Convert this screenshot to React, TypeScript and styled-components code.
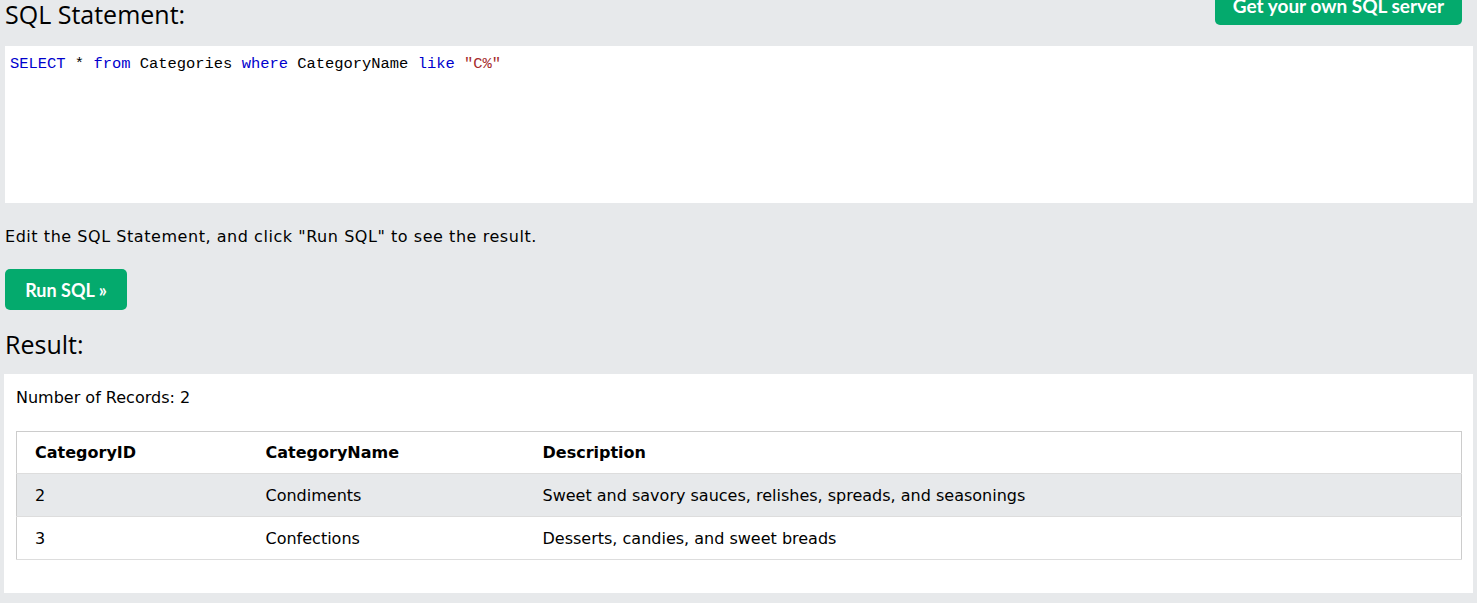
import React from "react";
import styled, { createGlobalStyle } from "styled-components";

const Global = createGlobalStyle`
  html, body { margin: 0; padding: 0; background: #e7e9eb; }
  body { font-family: "DejaVu Sans", Verdana, sans-serif; color: #000; }
`;

const Page = styled.div`
  padding: 0 4px 0 5px;
  display: flex;
  flex-direction: column;
`;

const HeaderRow = styled.div`
  display: flex;
  justify-content: space-between;
  align-items: flex-start;
  height: 46px;
`;

const Heading = styled.h2`
  margin: 0;
  font-family: "Open Sans", "Lato", sans-serif;
  font-weight: 400;
  font-size: 25px;
  line-height: 30px;
  color: #000;
`;

const TopHeading = styled(Heading)`
  line-height: 28px;
`;

const GreenButton = styled.button`
  background: #04aa6d;
  color: #fff;
  border: none;
  border-radius: 5px;
  font-family: "Lato", "Open Sans", sans-serif;
  font-weight: 700;
  cursor: pointer;
`;

const ServerButton = styled(GreenButton)`
  margin-top: -15px;
  margin-right: 11px;
  height: 40px;
  padding: 0 18px;
  font-size: 19px;
`;

const RunButton = styled(GreenButton)`
  height: 41px;
  width: 122px;
  padding: 0;
  font-size: 18px;
`;

const CodeBox = styled.div`
  background: #fff;
  height: 157px;
  padding: 9px 5px;
  box-sizing: border-box;
  font-family: "Liberation Mono", monospace;
  font-size: 15.45px;
  line-height: 18px;
  white-space: pre;
`;

const Kw = styled.span<{ $c: string }>`
  color: ${(p) => p.$c};
`;

const Hint = styled.p`
  margin: 24px 0 22px;
  font-size: 16px;
  letter-spacing: 0.55px;
  line-height: 20px;
`;

const ResultHead = styled(Heading)`
  margin-top: 19px;
  margin-bottom: 15px;
`;

const ResultPanel = styled.div`
  background: #fff;
  margin-left: -1px;
  padding: 13px 11px 33px 12px;
  font-family: "DejaVu Sans", Verdana, sans-serif;
  font-size: 16px;
`;

const Count = styled.div`
  line-height: 22px;
  margin-bottom: 22px;
`;

const Table = styled.table`
  width: 100%;
  table-layout: fixed;
  border-collapse: collapse;
  border: 1px solid #ccc;
`;

const Row = styled.tr<{ $alt?: boolean }>`
  background: ${(p) => (p.$alt ? "#e7e9eb" : "#fff")};
  border-bottom: 1px solid #ddd;
`;

const Th = styled.th<{ $w?: number }>`
  box-sizing: border-box;
  text-align: left;
  font-weight: 700;
  height: 42px;
  padding: 0 0 0 18px;
  width: ${(p) => (p.$w ? p.$w + "px" : "auto")};
`;

const Td = styled.td`
  height: 42px;
  padding: 0 0 0 18px;
`;

export default function App() {
  return (
    <>
      <Global />
      <Page>
        <HeaderRow>
          <TopHeading>SQL Statement:</TopHeading>
          <ServerButton>Get your own SQL server</ServerButton>
        </HeaderRow>
        <CodeBox>
          <Kw $c="#0000cd">SELECT</Kw> * <Kw $c="#0000cd">from</Kw> Categories{" "}
          <Kw $c="#0000cd">where</Kw> CategoryName <Kw $c="#0000cd">like</Kw>{" "}
          <Kw $c="#a52a2a">"C%"</Kw>
        </CodeBox>
        <Hint>Edit the SQL Statement, and click "Run SQL" to see the result.</Hint>
        <div>
          <RunButton>Run SQL »</RunButton>
        </div>
        <ResultHead>Result:</ResultHead>
        <ResultPanel>
          <Count>Number of Records: 2</Count>
          <Table>
            <tbody>
              <Row>
                <Th $w={231}>CategoryID</Th>
                <Th $w={277}>CategoryName</Th>
                <Th>Description</Th>
              </Row>
              <Row $alt>
                <Td>2</Td>
                <Td>Condiments</Td>
                <Td>Sweet and savory sauces, relishes, spreads, and seasonings</Td>
              </Row>
              <Row>
                <Td>3</Td>
                <Td>Confections</Td>
                <Td>Desserts, candies, and sweet breads</Td>
              </Row>
            </tbody>
          </Table>
        </ResultPanel>
      </Page>
    </>
  );
}
